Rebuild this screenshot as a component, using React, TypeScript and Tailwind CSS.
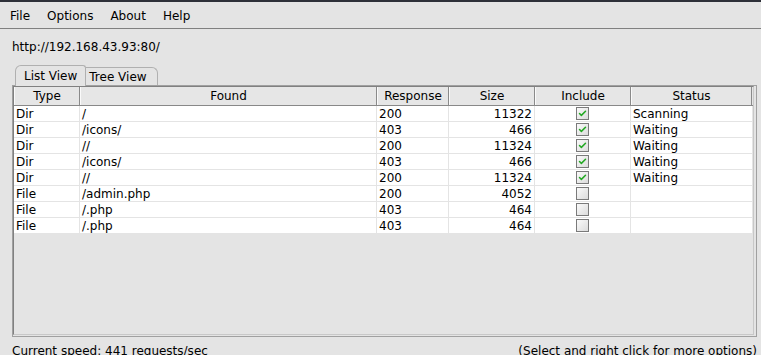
import { Check } from "lucide-react";

const columns = [
  { label: "Type", width: "w-[66px]" },
  { label: "Found", width: "w-[297px]" },
  { label: "Response", width: "w-[72px]" },
  { label: "Size", width: "w-[86px]" },
  { label: "Include", width: "w-[96px]" },
  { label: "Status", width: "w-[121px]" },
];

const rows = [
  { type: "Dir", found: "/", response: "200", size: "11322", include: true, status: "Scanning" },
  { type: "Dir", found: "/icons/", response: "403", size: "466", include: true, status: "Waiting" },
  { type: "Dir", found: "//", response: "200", size: "11324", include: true, status: "Waiting" },
  { type: "Dir", found: "/icons/", response: "403", size: "466", include: true, status: "Waiting" },
  { type: "Dir", found: "//", response: "200", size: "11324", include: true, status: "Waiting" },
  { type: "File", found: "/admin.php", response: "200", size: "4052", include: false, status: "" },
  { type: "File", found: "/.php", response: "403", size: "464", include: false, status: "" },
  { type: "File", found: "/.php", response: "403", size: "464", include: false, status: "" },
];

function Checkbox({ checked }: { checked: boolean }) {
  return (
    <div className="w-[13px] h-[13px] border border-[#7a7a7a] bg-gradient-to-br from-[#fafafa] to-[#dcdcdc] flex items-center justify-center">
      {checked && <Check size={9} strokeWidth={4} className="text-[#22a822]" />}
    </div>
  );
}

export default function App() {
  return (
    <div
      className="w-[761px] h-[355px] overflow-hidden bg-[#e4e4e4] text-[12px] text-black flex flex-col"
      style={{ fontFamily: '"DejaVu Sans", sans-serif' }}
    >
      {/* window top edge */}
      <div className="h-[2px] shrink-0 bg-[#2e3038]" />

      {/* Menu bar */}
      <div className="h-[27px] shrink-0 flex items-center gap-[17px] pl-[10px] pt-[2px] border-b border-[#808080]">
        <span>File</span>
        <span>Options</span>
        <span>About</span>
        <span>Help</span>
      </div>

      <div className="pl-[12px] pt-[9px] h-[36px] shrink-0">http://192.168.43.93:80/</div>

      {/* Tabs */}
      <div className="flex items-end pl-[15px] h-[20px] shrink-0">
        <div className="relative z-10 h-[21px] px-[8px] flex items-center bg-[#e4e4e4] border-t border-l border-r border-[#b0b0b0] rounded-tl-[6px] rounded-tr-[3px] -mb-px">
          List View
        </div>
        <div className="h-[18px] pl-[3px] pr-[10px] flex items-center border-t border-r border-[#b0b0b0] rounded-tr-[6px]">
          Tree View
        </div>
      </div>

      {/* Tab pane */}
      <div className="mx-[12px] w-[745px] h-[252px] shrink-0 border border-[#a0a0a0]">
        <div className="w-[741px] h-[249px] border border-[#808080] border-r-[#c8c8c8] border-b-[#c8c8c8] bg-[#e4e4e4]">
          {/* Header */}
          <div className="flex h-[19px] border-b border-[#888888] w-[739px]">
            {columns.map((c) => (
              <div
                key={c.label}
                className={`${c.width} shrink-0 flex items-center justify-center border-r border-[#8a8a8a] border-l border-l-[#fafafa] bg-[#e6e6e6]`}
              >
                {c.label}
              </div>
            ))}
          </div>

          {/* Rows */}
          {rows.map((r, i) => (
            <div key={i} className="flex h-[16px] bg-white border-b border-[#e4e4e4] w-[738px]">
              <div className="w-[66px] shrink-0 pl-[2px] flex items-center border-r border-[#e4e4e4]">{r.type}</div>
              <div className="w-[297px] shrink-0 pl-[2px] flex items-center border-r border-[#e4e4e4]">{r.found}</div>
              <div className="w-[72px] shrink-0 pl-[2px] flex items-center border-r border-[#e4e4e4]">{r.response}</div>
              <div className="w-[86px] shrink-0 pr-[2px] flex items-center justify-end border-r border-[#e4e4e4]">{r.size}</div>
              <div className="w-[96px] shrink-0 flex items-center justify-center border-r border-[#e4e4e4]">
                <Checkbox checked={r.include} />
              </div>
              <div className="w-[121px] shrink-0 pl-[2px] flex items-center">{r.status}</div>
            </div>
          ))}
        </div>
      </div>

      {/* Status bar */}
      <div className="flex justify-between pl-[12px] pr-[4px] pt-[5px] shrink-0">
        <span>Current speed: 441 requests/sec</span>
        <span>(Select and right click for more options)</span>
      </div>
    </div>
  );
}
